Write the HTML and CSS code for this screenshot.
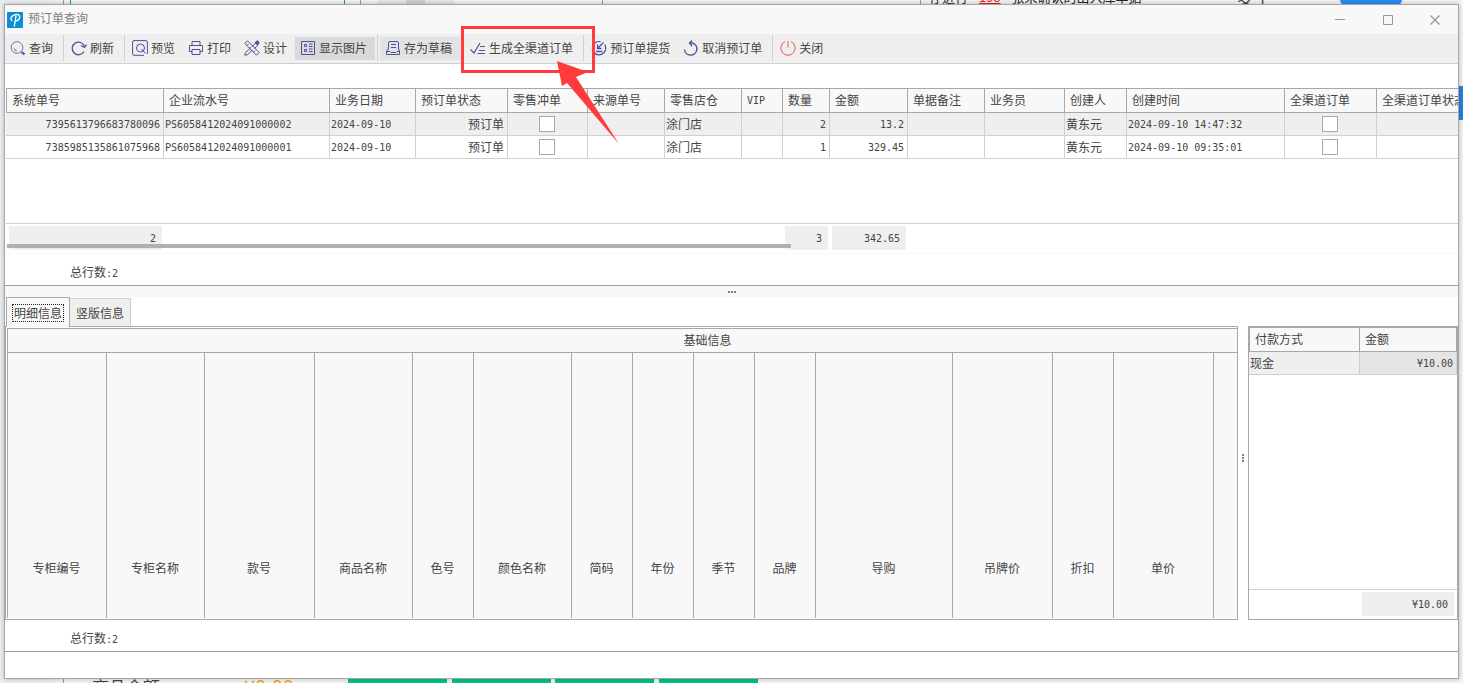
FILE: index.html
```
<!DOCTYPE html>
<html lang="zh-CN">
<head>
    <meta charset="UTF-8">
    <meta name="viewport" content="width=device-width, initial-scale=1.0">
    <title>预订单查询</title>
    <link rel="stylesheet" href="styles.css">
</head>
<body>
    <!-- main program behind the dialog -->
    <div class="backdrop">
        <i class="vline v1"></i>
        <i class="vline blue v2"></i>
        <i class="vline blue v3"></i>
        <i class="vline v4"></i>
        <i class="block b1"></i>
        <i class="block b2"></i>
        <i class="vline v5"></i>
        <i class="vline v6"></i>
        <p class="notice">存进行 <a href="#">198</a> 张未确认的出入库单据</p>
        <p class="user">麦子</p>
        <i class="block pill"></i>
        <i class="block side"></i>
        <p class="balance">商品余额</p>
        <p class="money">¥0.00</p>
        <i class="block green g1"></i>
        <i class="block green g2"></i>
        <i class="block green g3"></i>
        <i class="block green g4"></i>
    </div>

    <div class="window">
        <header class="titlebar">
            <svg class="logo" viewBox="0 0 16 16"><rect width="16" height="16" rx="1" fill="#0a8ed6"/><path d="M7.300 14 9 4M4.800 8.500C2.800 7 4 4 7.500 2.800c4-1.200 5.800.7 5 3.200-.8 2.300-2.500 3-4.300 3" fill="none" stroke="#fff" stroke-width="1.400" stroke-linecap="round"/></svg>
            <h1>预订单查询</h1>
            <button class="win-btn" aria-label="最小化"><svg viewBox="0 0 10 10"><path d="M0 4.500h10"/></svg></button>
            <button class="win-btn" aria-label="最大化"><svg viewBox="0 0 10 10"><path d="M.5.5h9v9h-9z"/></svg></button>
            <button class="win-btn" aria-label="关闭窗口"><svg viewBox="0 0 10 10"><path d="M.5.5l9 9M9.500.5l-9 9" stroke-width="1.300"/></svg></button>
        </header>

        <nav class="toolbar">
            <button><svg viewBox="0 0 16 16"><circle cx="7" cy="7.500" r="5.800" stroke-width=".8"/><path d="M4 8.500a3.300 3.300 0 0 0 3 2.500" stroke-width=".8"/><path d="M11.500 12l3 2.500" stroke-width="2.200"/></svg>查询</button>
            <i class="sep"></i>
            <button><svg viewBox="0 0 16 16"><path d="M13 11.500A6.300 6.300 0 1 1 13.500 6.500" stroke-width="1.300"/><path d="M10 5.500l3.500 2L15.500 4.500" stroke-width="1.300"/></svg>刷新</button>
            <i class="sep"></i>
            <button><svg viewBox="0 0 16 16"><path d="M12 15.300H2A1.500 1.500 0 0 1 .6 13.800V2A1.500 1.500 0 0 1 2 .6h12A1.500 1.500 0 0 1 15.400 2v12"/><circle cx="8.500" cy="8" r="4"/><path d="M9.500 9l4 4.500"/></svg>预览</button>
            <button><svg viewBox="0 0 16 16"><path d="M4 5.500V1.500h8v4M4 11.500H1.500v-6h13v6H12M4 9.500h8v5H4z"/></svg>打印</button>
            <button><svg viewBox="0 0 16 16"><path d="M.8 3.500 3.500.8 15.200 12.500 12.500 15.200zM3 5.500l1.500-1.500M5.500 8l1.500-1.500M9.500 12l1.500-1.500"/><path d="M6.500 8 1.500 12.500.8 15.200l3-.7L8.500 10M8.500 6.500l4-4.500M10.500 8.500l4-4"/><circle cx="13.300" cy="2.700" r="1.700" fill="#4a5299"/></svg>设计</button>
            <button class="pressed"><svg viewBox="0 0 16 16"><path d="M1.500 1.500h13v13h-13zM4.500 4.500h2v2h-2zM4.500 9.500h2v2h-2zM9 4h3.500M9 6.500h3.500M9 9h3.500M9 11.500h3.500"/></svg>显示图片</button>
            <i class="sep"></i>
            <button class="soft"><svg viewBox="0 0 16 16"><path d="M3.500 9.500V3a1.500 1.500 0 0 1 1.500-1.500h7A1.500 1.500 0 0 1 13.500 3v6.500M6 4.500h5M6 7.500h5M3.500 8.500 1.500 11v3.500h13V11l-1-2.500M1.500 11.500h3.500l1 1h5l1-1h2.500"/></svg>存为草稿</button>
            <i class="sep"></i>
            <button><svg viewBox="0 0 16 16"><path d="M.5 9.500 4 13 10 3" stroke-width="1.200"/><path d="M10 6.500h5M9 10.500h6M7.500 13.500H15"/></svg>生成全渠道订单</button>
            <i class="sep"></i>
            <button><svg viewBox="0 0 16 16"><path d="M9.500 1.700A6.700 6.700 0 1 0 14.700 8c0-1.300-.4-2.500-1-3.500" stroke-width="1.200"/><path d="M12.500 2.500 7 8M6.500 4.500v4h4M5 11.500h6.500" stroke-width="1.300"/></svg>预订单提货</button>
            <button><svg viewBox="0 0 16 16"><path d="M1.500 9.500a6.200 6.200 0 1 0 8-6.500H7" stroke-width="1.400"/><path d="M9 .5 6.500 3 9 6" stroke-width="1.400"/></svg>取消预订单</button>
            <i class="sep"></i>
            <button><svg class="power" viewBox="0 0 16 16"><path d="M5 1.500a7.200 7.200 0 1 0 6 0M8 1v6.500"/></svg>关闭</button>
        </nav>

        <section class="orders">
            <table class="grid order-grid">
                <colgroup>
                    <col class="c158"><col class="c166"><col class="c86"><col class="c92"><col class="c80"><col class="c77"><col class="c77"><col class="c41"><col class="c47"><col class="c78"><col class="c77"><col class="c80"><col class="c62"><col class="c158"><col class="c92"><col>
                </colgroup>
                <thead>
                    <tr><th>系统单号</th><th>企业流水号</th><th>业务日期</th><th>预订单状态</th><th>零售冲单</th><th>来源单号</th><th>零售店仓</th><th><span class="n">VIP</span></th><th>数量</th><th>金额</th><th>单据备注</th><th>业务员</th><th>创建人</th><th>创建时间</th><th>全渠道订单</th><th>全渠道订单状态</th></tr>
                </thead>
                <tbody>
                    <tr class="selected"><td class="right n">7395613796683780096</td><td class="n">PS6058412024091000002</td><td class="n">2024-09-10</td><td class="right">预订单</td><td class="mid"><input type="checkbox" aria-label="零售冲单"></td><td></td><td>涂门店</td><td></td><td class="right n">2</td><td class="right n">13.2</td><td></td><td></td><td>黄东元</td><td class="n">2024-09-10 14:47:32</td><td class="mid"><input type="checkbox" aria-label="全渠道订单"></td><td></td></tr>
                    <tr><td class="right n">7385985135861075968</td><td class="n">PS6058412024091000001</td><td class="n">2024-09-10</td><td class="right">预订单</td><td class="mid"><input type="checkbox" aria-label="零售冲单"></td><td></td><td>涂门店</td><td></td><td class="right n">1</td><td class="right n">329.45</td><td></td><td></td><td>黄东元</td><td class="n">2024-09-10 09:35:01</td><td class="mid"><input type="checkbox" aria-label="全渠道订单"></td><td></td></tr>
                </tbody>
            </table>
            <div class="summary">
                <table>
                    <colgroup>
                        <col class="c158"><col class="c578"><col class="c41"><col class="c47"><col class="c78"><col>
                    </colgroup>
                    <tr><td><span class="sum n">2</span></td><td></td><td></td><td><span class="sum n">3</span></td><td><span class="sum n">342.65</span></td><td></td></tr>
                </table>
                <div class="scrollbar"></div>
            </div>
        </section>
        <div class="total">总行数<span class="n">:2</span></div>
        <div class="splitter"><i></i><i></i><i></i></div>

        <div class="tabs">
            <button class="active"><span>明细信息</span></button>
            <button><span>竖版信息</span></button>
        </div>
        <section class="details">
            <div class="items">
                <div class="items-grid">
                    <h2>基础信息</h2>
                    <div class="cols">
                        <div class="w99">专柜编号</div><div class="w98">专柜名称</div><div class="w110">款号</div><div class="w98">商品名称</div><div class="w61">色号</div><div class="w98">颜色名称</div><div class="w61">简码</div><div class="w61">年份</div><div class="w61">季节</div><div class="w61">品牌</div><div class="w137">导购</div><div class="w100">吊牌价</div><div class="w61">折扣</div><div class="w100">单价</div>
                    </div>
                </div>
            </div>
            <div class="vsplitter"><i></i><i></i><i></i></div>
            <div class="payments">
                <table class="grid">
                    <colgroup><col class="c111"><col></colgroup>
                    <thead><tr><th>付款方式</th><th>金额</th></tr></thead>
                    <tbody><tr class="selected"><td>现金</td><td class="right n focus">¥10.00</td></tr></tbody>
                </table>
                <div class="pay-sum"><span class="sum n">¥10.00</span></div>
            </div>
        </section>
        <div class="total">总行数<span class="n">:2</span></div>
        <footer class="bottom"></footer>

        <!-- highlight on the toolbar button -->
        <svg class="marker" width="160" height="120" viewBox="0 0 160 120">
            <path d="M1.500 1.500h131v44h-131z" fill="none" stroke="#ff3b3b" stroke-width="3"/>
            <path d="M96 35 127 46 115 51 158 118 106 57 101 60z" fill="#ff3b3b"/>
        </svg>
    </div>
</body>
</html>
```
FILE: styles.css
```
* {
    margin: 0;
    padding: 0;
    box-sizing: border-box;
}
body {
    height: 100vh;
    padding: 4px;
    background: #eceef1;
    color: #444;
    font: 12px/16px "Noto Sans CJK SC", sans-serif;
    overflow: hidden;
}
button {
    border: none;
    background: none;
    color: inherit;
    font: inherit;
}
table {
    width: 100%;
    table-layout: fixed;
    border-collapse: separate;
    border-spacing: 0;
}
.n {
    font-family: "DejaVu Sans Mono", "Noto Sans CJK SC", monospace;
    font-size: 10px;
}

/* program behind */
.backdrop {
    position: absolute;
    inset: 0;
    overflow: hidden;
    background: linear-gradient(90deg, #eceef1 50px, #f4f4f4 70px);
}
.backdrop i,
.backdrop p {
    position: absolute;
    top: 0;
    white-space: nowrap;
}
.vline {
    width: 1px;
    height: 100%;
    background: #999;
}
.vline.blue {
    height: 10px;
    background: #0a8ed6;
}
.v1 { left: 63px; }
.v2 { left: 70px; }
.v3 { left: 344px; }
.v4 { left: 360px; }
.v5 { left: 602px; }
.v6 { left: 920px; }
.vline.v4,
.vline.v5,
.vline.v6 {
    height: 10px;
}
.block {
    height: 10px;
}
.b1 {
    left: 378px;
    width: 76px;
    background: #e6e6e6;
}
.b2 {
    left: 406px;
    width: 19px;
    background: #d0d0d0;
}
.backdrop .notice {
    top: -11px;
    left: 929px;
    color: #222;
    font-size: 13px;
}
.notice a {
    margin: 0 8px;
    color: #e02020;
}
.backdrop .user {
    top: -11px;
    left: 1237px;
    font-size: 17px;
}
.pill {
    left: 1340px;
    width: 62px;
    border-radius: 0 0 6px 6px;
    background: #2d8cf0;
}
.block.pill {
    height: 5px;
}
.backdrop .side {
    top: 86px;
    right: 0;
    width: 8px;
    height: 34px;
    background: #2383e0;
}
.backdrop .balance,
.backdrop .money {
    top: auto;
    bottom: -12px;
    left: 92px;
    font-size: 17px;
}
.backdrop .money {
    left: 244px;
    color: #f5a623;
    font-size: 20px;
}
.backdrop .green {
    top: auto;
    bottom: 0;
    width: 99px;
    background: #00c77c;
}
.g1 { left: 348px; }
.g2 { left: 452px; }
.g3 { left: 555px; }
.g4 { left: 659px; }

/* window */
.window {
    position: relative;
    display: flex;
    flex-direction: column;
    height: 100%;
    border: 1px solid #a6a6a6;
    background: #fff;
    box-shadow: 0 0 5px rgba(0, 0, 0, 0.25);
}
.titlebar {
    display: flex;
    align-items: center;
    height: 29px;
    padding-left: 2px;
    background: #f8f8f8;
}
.logo {
    width: 16px;
    height: 16px;
    margin-right: 5px;
}
.titlebar h1 {
    flex: 1;
    padding-bottom: 4px;
    color: #808080;
    font-size: 12px;
    font-weight: normal;
}
.win-btn {
    width: 48px;
    height: 28px;
    line-height: 0;
}
.win-btn svg {
    width: 10px;
    height: 10px;
    fill: none;
    stroke: #999;
}
.win-btn:last-child {
    width: 46px;
}
.toolbar {
    display: flex;
    align-items: center;
    height: 30px;
    padding-bottom: 1px;
    border-bottom: 1px solid #d0d0d0;
    background: #efefef;
}
.toolbar button {
    display: flex;
    align-items: center;
    gap: 3px;
    height: 23px;
    padding: 0 8px 0 5px;
    white-space: nowrap;
}
.toolbar svg {
    width: 16px;
    height: 16px;
    fill: none;
    stroke: #4a5299;
}
.toolbar svg.power {
    stroke: #e05a4f;
}
.toolbar .pressed {
    background: #d9d9d9;
}
.toolbar .soft {
    background: #e3e3e3;
}
.sep {
    width: 1px;
    height: 26px;
    margin: 0 2px;
    background: #d0d0d0;
}

/* grids */
.orders {
    padding: 24px 0 0 1px;
}
.grid th,
.grid td {
    overflow: hidden;
    white-space: nowrap;
    text-align: left;
    font-weight: normal;
}
.grid th {
    height: 25px;
    padding: 0 5px 2px;
    border: 1px solid #a8a8a8;
    border-left: none;
    background: #f8f8f8;
}
.grid th:first-child {
    border-left: 1px solid #a8a8a8;
}
.grid td {
    height: 23px;
    padding: 0 2px 0 1px;
    border: 1px solid #d0d0d0;
    border-width: 0 1px 1px 0;
}
.grid td.n {
    padding-top: 2px;
}
.order-grid th:last-child,
.order-grid td:last-child {
    border-right: none;
}
.grid .right {
    padding-right: 3px;
    text-align: right;
}
.grid .mid {
    text-align: center;
}
.grid .selected {
    background: #efefef;
}
.grid .focus {
    background: #e5e5e5;
}
.grid input {
    display: block;
    width: 16px;
    height: 16px;
    margin: 0 auto;
    appearance: none;
    border: 1px solid #a8a8a8;
    background: #fff;
}
.order-grid {
    margin-bottom: 64px;
}
.c41 { width: 41px; }
.c47 { width: 47px; }
.c62 { width: 62px; }
.c77 { width: 77px; }
.c78 { width: 78px; }
.c80 { width: 80px; }
.c86 { width: 86px; }
.c92 { width: 92px; }
.c111 { width: 111px; }
.c158 { width: 158px; }
.c166 { width: 166px; }
.c578 { width: 578px; }

.summary {
    position: relative;
    height: 31px;
    padding-top: 2px;
    border-top: 1px solid #d0d0d0;
    border-bottom: 1px solid #f8f8f8;
}
.summary td {
    padding: 0 2px;
}
.summary td:first-child {
    padding-left: 3px;
}
.sum {
    display: block;
    height: 24px;
    padding-right: 6px;
    background: #efefef;
    line-height: 25px;
    text-align: right;
}
.scrollbar {
    position: absolute;
    bottom: 5px;
    left: 1px;
    width: 54%;
    height: 4px;
    background: #b0b0b0;
}
.total {
    height: 32px;
    padding: 10px 0 0 65px;
    border-bottom: 1px solid #a0a0a0;
}
.splitter {
    display: flex;
    align-items: center;
    justify-content: center;
    gap: 1px;
    height: 11px;
    background: #f8f8f8;
}
.splitter i,
.vsplitter i {
    width: 2px;
    height: 2px;
    background: #808080;
}

/* tabs and details */
.tabs {
    display: flex;
    align-items: flex-end;
    height: 29px;
    padding-left: 1px;
}
.tabs button {
    height: 28px;
    padding: 0 5px;
    border: 1px solid #d0d0d0;
    border-bottom: none;
    border-left: none;
    background: #efefef;
}
.tabs span {
    display: block;
    padding: 1px;
    line-height: 16px;
}
.tabs .active {
    position: relative;
    z-index: 1;
    height: 30px;
    margin-bottom: -1px;
    border: 1px solid #a8a8a8;
    border-bottom: none;
    background: #f8f8f8;
}
.tabs .active span {
    padding: 0 1px;
    border: 1px dotted #222;
}
.details {
    display: flex;
    flex: 1;
    min-height: 0;
}
.items {
    display: flex;
    flex: 1;
    min-width: 0;
    padding: 1px 0 1px 1px;
    border: 1px solid #a8a8a8;
}
.items-grid {
    display: flex;
    flex: 1;
    flex-direction: column;
    min-width: 0;
    border: 1px solid #a8a8a8;
    border-width: 1px 0 0 1px;
    background: #f8f8f8;
}
.items-grid h2 {
    height: 24px;
    padding-left: 170px;
    border-bottom: 1px solid #a8a8a8;
    font-size: 12px;
    font-weight: normal;
    line-height: 22px;
    text-align: center;
}
.cols {
    display: flex;
    flex: 1;
    overflow: hidden;
}
.cols div {
    display: flex;
    flex: none;
    align-items: flex-end;
    justify-content: center;
    padding-right: 1px;
    padding-bottom: 42px;
    border-right: 1px solid #a8a8a8;
}
.w61 { width: 61px; }
.w98 { width: 98px; }
.w99 { width: 99px; }
.w100 { width: 100px; }
.w110 { width: 110px; }
.w137 { width: 137px; }
.vsplitter {
    display: flex;
    flex-direction: column;
    align-items: center;
    justify-content: center;
    gap: 1px;
    width: 10px;
    padding-bottom: 30px;
}
.payments {
    display: flex;
    flex-direction: column;
    justify-content: space-between;
    width: 210px;
    border: 1px solid #a8a8a8;
}
.pay-sum {
    display: flex;
    justify-content: flex-end;
    height: 30px;
    padding: 2px 3px;
    border-top: 1px solid #d0d0d0;
}
.pay-sum .sum {
    width: 92px;
}
.bottom {
    height: 26px;
}

/* marker lies over the toolbar and the first rows */
.marker {
    position: absolute;
    top: 21px;
    left: 456px;
    pointer-events: none;
}
```
